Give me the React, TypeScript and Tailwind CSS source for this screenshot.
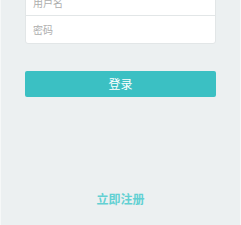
import React from 'react';

export default function App() {
  return (
    <div
      className="w-[241px] h-[225px] overflow-hidden bg-[#ecf0f1] border-x border-[#f6f8f8]"
      style={{ fontFamily: '"Noto Sans CJK SC", "Noto Sans", sans-serif' }}
    >
      <div className="mx-[24px] -mt-[12px] rounded-[3px] border border-[#e2e6e7] bg-white">
        <input
          className="block w-full h-[27px] px-[7px] text-[10px] bg-transparent outline-none border-b border-[#e2e6e7] placeholder:text-[#adadad]"
          placeholder="用户名"
        />
        <input
          type="password"
          className="block w-full h-[27px] px-[7px] text-[10px] bg-transparent outline-none placeholder:text-[#adadad]"
          placeholder="密码"
        />
      </div>
      <button className="mt-[27px] mx-[24px] block w-[191px] h-[26px] rounded-[2px] bg-[#3bc0c3] text-white text-[12px] leading-none">
        登录
      </button>
      <div className="mt-[94px] text-center text-[12px] leading-[16px] font-bold text-[#62d0d3]">
        立即注册
      </div>
    </div>
  );
}
